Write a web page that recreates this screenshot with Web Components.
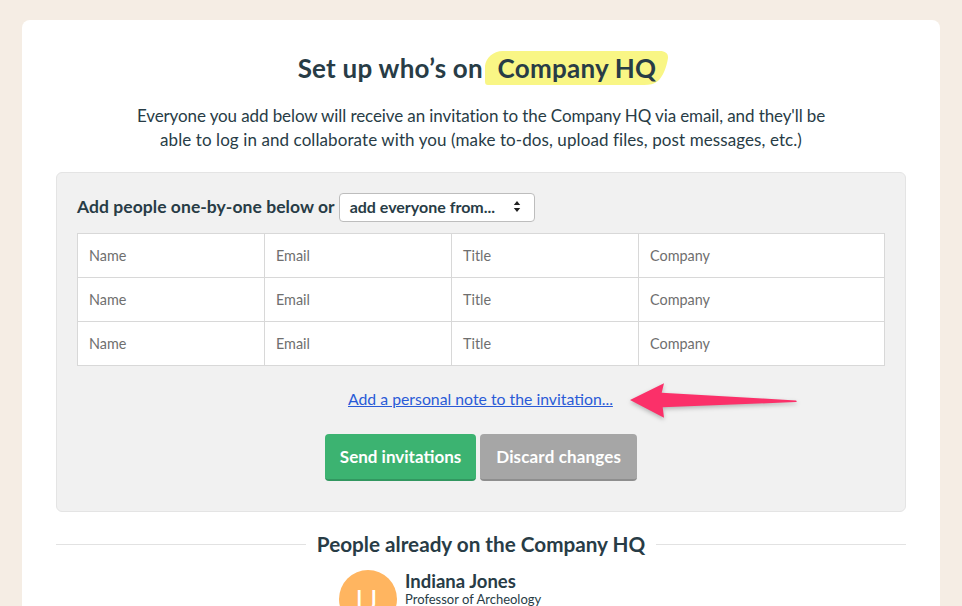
<!DOCTYPE html>
<html>
<head>
<meta charset="utf-8">
<title>Set up who's on Company HQ</title>
<style>
html, body { margin: 0; height: 606px; overflow: hidden; background: #f5ede4; }
body { font-family: Lato, "Noto Sans", sans-serif; color: #283c46; }
</style>
</head>
<body>
<setup-page>
  <setup-heading>Company HQ</setup-heading>
  <intro-text>
    <span style="letter-spacing:-.1px">Everyone you add below will receive an invitation to the Company HQ via email, and they'll be</span><br>
    <span style="letter-spacing:.09px">able to log in and collaborate with you (make to-dos, upload files, post messages, etc.)</span>
  </intro-text>
  <invite-panel>
    <invite-row></invite-row>
    <invite-row></invite-row>
    <invite-row></invite-row>
  </invite-panel>
  <people-list heading="People already on the Company HQ">
    <person-entry initials="IJ" name="Indiana Jones" role="Professor of Archeology"></person-entry>
  </people-list>
</setup-page>

<script>
const pageTemplate = document.createElement('template');
pageTemplate.innerHTML = `
<style>
:host { display: block; }
.card {
    margin: 20px 22px 0;
    height: 620px;
    padding: 0 34px;
    background: #fff;
    border-radius: 8px;
}
</style>
<div class="card"><slot></slot></div>
`;

class SetupPage extends HTMLElement {
    constructor() {
        super();
        this.attachShadow({ mode: 'open' }).append(pageTemplate.content.cloneNode(true));
    }
}

const headingTemplate = document.createElement('template');
headingTemplate.innerHTML = `
<style>
:host {
    display: block;
    padding: 30px 0 0 4px;
    margin-bottom: 18px;
    text-align: center;
    font-size: 26px;
    line-height: 36px;
    font-weight: 700;
    letter-spacing: .25px;
    color: #283c46;
}
.mark {
    position: relative;
    display: inline-block;
    padding: 0 12px 0 13px;
    margin-left: -5px;
}
.mark svg {
    position: absolute;
    left: 0;
    top: 1px;
    width: 100%;
    height: 34px;
    overflow: visible;
}
.mark span { position: relative; }
</style>
Set up who’s on <span class="mark"><svg viewBox="0 0 185 34" preserveAspectRatio="none"><path d="M0 15 C1 7 8 0 18 0 L176 0 C182 0 185 3 184 8 C183 15 179 26 174 30 C170 33 166 34 160 34 L3 34 C1 34 0 33 0 30 Z" fill="#f9f685"/></svg><span><slot></slot></span></span>
`;

class SetupHeading extends HTMLElement {
    constructor() {
        super();
        this.attachShadow({ mode: 'open' }).append(headingTemplate.content.cloneNode(true));
    }
}

const introTemplate = document.createElement('template');
introTemplate.innerHTML = `
<style>
:host {
    display: block;
    margin-bottom: 20px;
    text-align: center;
    font-size: 17px;
    line-height: 24px;
}
</style>
<slot></slot>
`;

class IntroText extends HTMLElement {
    constructor() {
        super();
        this.attachShadow({ mode: 'open' }).append(introTemplate.content.cloneNode(true));
    }
}

const panelTemplate = document.createElement('template');
panelTemplate.innerHTML = `
<style>
:host {
    display: block;
    position: relative;
    height: 340px;
    box-sizing: border-box;
    padding: 19px 20px 0;
    background: #f1f1f1;
    border: 1px solid #e4e4e4;
    border-radius: 6px;
}
.lead {
    display: flex;
    align-items: center;
    gap: 4px;
    box-sizing: border-box;
    height: 30px;
    padding-bottom: 2px;
    margin-bottom: 11px;
    font-size: 17.5px;
    letter-spacing: .05px;
    font-weight: 700;
}
.picker {
    display: flex;
    align-items: center;
    justify-content: space-between;
    box-sizing: border-box;
    width: 196px;
    height: 29px;
    margin-bottom: -2px;
    padding: 0 13px 2px 10px;
    background: #fff;
    border: 1px solid #bdbdbd;
    border-radius: 4px;
    font-size: 16px;
    letter-spacing: 0;
    font-weight: 700;
}
.rows {
    border: 1px solid #d8d8d8;
    border-bottom: none;
    background: #fff;
}
.note {
    margin-top: 23px;
    padding-left: 271px;
    font-size: 15.8px;
    line-height: 20px;
}
.note a { color: #2a5bd7; text-decoration: underline; }
.actions {
    display: flex;
    justify-content: center;
    gap: 4px;
    margin-top: 25px;
}
.arrow {
    position: absolute;
    left: 573px;
    top: 207px;
    filter: drop-shadow(0 2px 2px rgba(0,0,0,.25));
}
</style>
<div class="lead">Add people one-by-one below or
    <div class="picker">add everyone from...
        <svg width="8" height="13" viewBox="0 0 10 14" preserveAspectRatio="none"><path d="M5 1 L9 5.5 H1 Z M1 8.5 H9 L5 13 Z" fill="#222"/></svg>
    </div>
</div>
<div class="rows"><slot></slot></div>
<div class="note"><a href="#">Add a personal note to the invitation...</a></div>
<div class="actions">
    <app-button variant="primary">Send invitations</app-button>
    <app-button variant="secondary">Discard changes</app-button>
</div>
<svg class="arrow" width="168" height="44" viewBox="0 0 168 44"><path d="M0 20 L34 3.3 L31.7 12.7 L166 20.5 Q167.5 21.5 166 22 L32.7 27.3 L34 37.7 Z" fill="#fb3069"/></svg>
`;

class InvitePanel extends HTMLElement {
    constructor() {
        super();
        this.attachShadow({ mode: 'open' }).append(panelTemplate.content.cloneNode(true));
    }
}

const rowTemplate = document.createElement('template');
rowTemplate.innerHTML = `
<style>
:host {
    display: grid;
    grid-template-columns: 187px 187px 187px 1fr;
    height: 44px;
    box-sizing: border-box;
    border-bottom: 1px solid #d8d8d8;
    font-size: 14.4px;
    color: #6f6f6f;
}
div {
    display: flex;
    align-items: center;
    padding: 0 0 1px 11px;
    border-right: 1px solid #d8d8d8;
}
div:last-child { border-right: none; }
</style>
<div>Name</div><div>Email</div><div>Title</div><div>Company</div>
`;

class InviteRow extends HTMLElement {
    constructor() {
        super();
        this.attachShadow({ mode: 'open' }).append(rowTemplate.content.cloneNode(true));
    }
}

const buttonTemplate = document.createElement('template');
buttonTemplate.innerHTML = `
<style>
:host {
    display: flex;
    align-items: center;
    box-sizing: border-box;
    height: 47px;
    padding: 0 16px;
    border-radius: 4px;
    font-size: 17px;
    font-weight: 700;
    color: #fff;
}
:host([variant="primary"]) { background: #3cb371; border-bottom: 2px solid #329760; padding: 0 15px; }
:host([variant="secondary"]) { background: #a6a6a6; border-bottom: 2px solid #8e8e8e; letter-spacing: .15px; }
</style>
<slot></slot>
`;

class AppButton extends HTMLElement {
    constructor() {
        super();
        this.attachShadow({ mode: 'open' }).append(buttonTemplate.content.cloneNode(true));
    }
}

const listTemplate = document.createElement('template');
listTemplate.innerHTML = `
<style>
:host { display: block; margin-top: 18px; }
.title {
    display: flex;
    align-items: center;
    gap: 11px;
    font-size: 20.7px;
    line-height: 28px;
    font-weight: 700;
}
.title::before, .title::after {
    content: "";
    flex: 1;
    height: 1px;
    background: #e2e2e2;
}
.people { margin-top: 12px; padding-left: 283px; }
</style>
<div class="title"></div>
<div class="people"><slot></slot></div>
`;

class PeopleList extends HTMLElement {
    constructor() {
        super();
        this.attachShadow({ mode: 'open' }).append(listTemplate.content.cloneNode(true));
        this.shadowRoot.querySelector('.title').textContent = this.getAttribute('heading');
    }
}

const personTemplate = document.createElement('template');
personTemplate.innerHTML = `
<style>
:host { display: flex; gap: 8px; }
.avatar {
    display: flex;
    align-items: center;
    justify-content: center;
    width: 58px;
    height: 58px;
    border-radius: 50%;
    background: #ffb560;
    color: #fff;
    font-size: 27px;
    letter-spacing: 3px;
}
.name { font-size: 18.5px; line-height: 22px; font-weight: 700; }
.role { margin-top: 1px; font-size: 13px; line-height: 13px; }
</style>
<div class="avatar"></div>
<div>
    <div class="name"></div>
    <div class="role"></div>
</div>
`;

class PersonEntry extends HTMLElement {
    constructor() {
        super();
        this.attachShadow({ mode: 'open' }).append(personTemplate.content.cloneNode(true));
        this.shadowRoot.querySelector('.avatar').textContent = this.getAttribute('initials');
        this.shadowRoot.querySelector('.name').textContent = this.getAttribute('name');
        this.shadowRoot.querySelector('.role').textContent = this.getAttribute('role');
    }
}

customElements.define('app-button', AppButton);
customElements.define('invite-row', InviteRow);
customElements.define('invite-panel', InvitePanel);
customElements.define('person-entry', PersonEntry);
customElements.define('people-list', PeopleList);
customElements.define('intro-text', IntroText);
customElements.define('setup-heading', SetupHeading);
customElements.define('setup-page', SetupPage);
</script>
</body>
</html>
